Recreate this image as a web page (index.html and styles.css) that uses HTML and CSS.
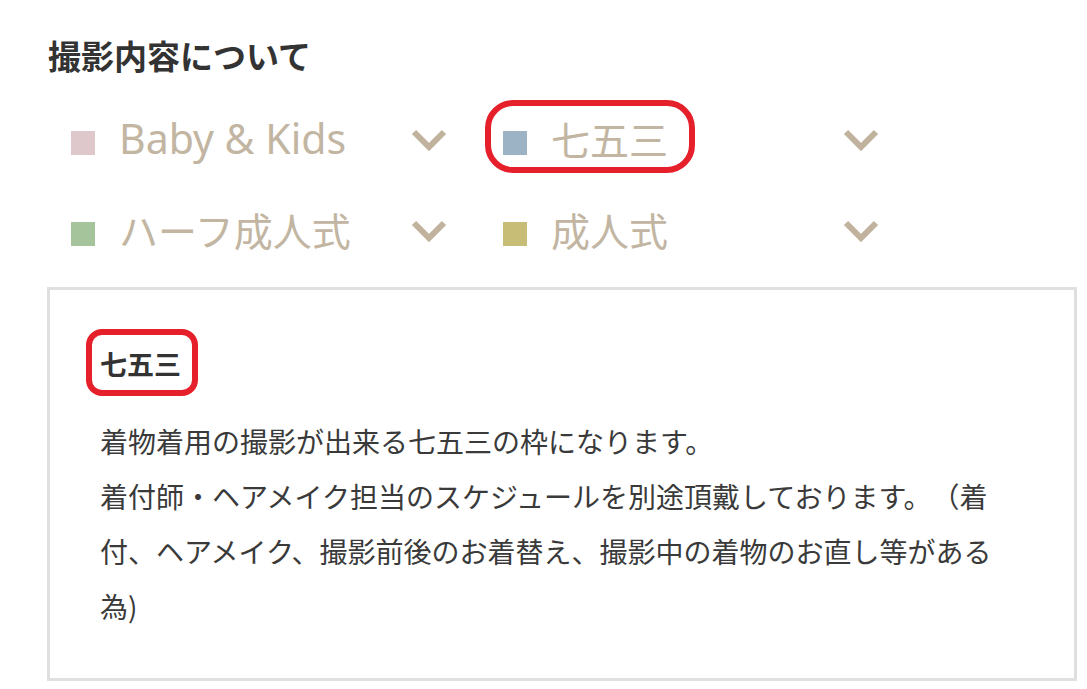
FILE: index.html
```html
<!DOCTYPE html>
<html lang="ja">
<head>
<meta charset="utf-8">
<title>撮影内容について</title>
<link rel="stylesheet" href="styles.css">
</head>
<body>
<div class="page">
  <h2 class="title">撮影内容について</h2>
  <div class="menu">
    <div class="item">
      <span class="swatch swatch-pink"></span>
      <span class="label label-latin">Baby &amp; Kids</span>
      <svg class="chev" viewBox="0 0 36 22" width="36" height="22"><polyline points="3,3 18,18 33,3"/></svg>
    </div>
    <div class="item">
      <span class="swatch swatch-blue"></span>
      <span class="label">七五三</span>
      <svg class="chev" viewBox="0 0 36 22" width="36" height="22"><polyline points="3,3 18,18 33,3"/></svg>
      <span class="mark mark-menu"></span>
    </div>
    <div class="item">
      <span class="swatch swatch-green"></span>
      <span class="label">ハーフ成人式</span>
      <svg class="chev" viewBox="0 0 36 22" width="36" height="22"><polyline points="3,3 18,18 33,3"/></svg>
    </div>
    <div class="item">
      <span class="swatch swatch-olive"></span>
      <span class="label">成人式</span>
      <svg class="chev" viewBox="0 0 36 22" width="36" height="22"><polyline points="3,3 18,18 33,3"/></svg>
    </div>
  </div>
  <div class="panel">
    <h3 class="panel-title">七五三<span class="mark mark-title"></span></h3>
    <p class="panel-text">着物着用の撮影が出来る七五三の枠になります。<br>着付師・ヘアメイク担当のスケジュールを別途頂戴しております。（着付、ヘアメイク、撮影前後のお着替え、撮影中の着物のお直し等がある為)</p>
  </div>
</div>
</body>
</html>
```

FILE: styles.css
```css
* { box-sizing: border-box; }
html, body { margin: 0; padding: 0; background: #ffffff; }
body {
  font-family: "Noto Sans", "Noto Sans CJK JP", sans-serif;
  color: #333333;
  text-spacing-trim: space-all;
}
.page {
  width: 1087px;
  padding: 31px 10px 0 47px;
}
.title {
  margin: 0 0 0 1px;
  font-family: "Noto Sans CJK JP", sans-serif;
  font-size: 33px;
  font-weight: 700;
  line-height: 48px;
  color: #333333;
}
.menu {
  display: grid;
  grid-template-columns: 376px 376px;
  column-gap: 56px;
  row-gap: 21px;
  margin: 26px 0 0 24px;
}
.item {
  position: relative;
  display: flex;
  align-items: center;
  height: 70px;
}
.swatch {
  flex: none;
  width: 24px;
  height: 24px;
  margin-top: 6px;
  margin-right: 24px;
}
.swatch-pink { background: #dfc8cc; }
.swatch-blue { background: #9cb3c5; }
.swatch-green { background: #a6c49b; }
.swatch-olive { background: #c8bd76; }
.label {
  flex: 1;
  font-size: 39px;
  line-height: 50px;
  color: #c2b5a2;
  white-space: nowrap;
}
.label-latin {
  font-size: 41px;
  margin-top: -4px;
}
.chev {
  flex: none;
  display: block;
}
.chev polyline {
  fill: none;
  stroke: #c0b29c;
  stroke-width: 6;
}
.mark {
  position: absolute;
  border: 6px solid #e5202b;
  pointer-events: none;
}
.mark-menu {
  left: -18px;
  top: -5px;
  width: 210px;
  height: 73px;
  border-radius: 28px;
}
.panel {
  margin-top: 21px;
  width: 1030px;
  border: 3px solid #e0e0e0;
  padding: 54px 74px 44px 50px;
}
.panel-title {
  position: relative;
  display: inline-block;
  margin: 0;
  font-family: "Noto Sans CJK JP", sans-serif;
  font-size: 27px;
  font-weight: 700;
  line-height: 39px;
  color: #333333;
}
.mark-title {
  left: -14px;
  top: -15px;
  width: 112px;
  height: 67px;
  border-radius: 16px;
}
.panel-text {
  margin: 31px 0 0 0;
  font-family: "Noto Sans CJK JP", sans-serif;
  font-size: 28px;
  line-height: 55px;
  color: #3a3a3a;
  text-spacing-trim: space-all;
}
```
